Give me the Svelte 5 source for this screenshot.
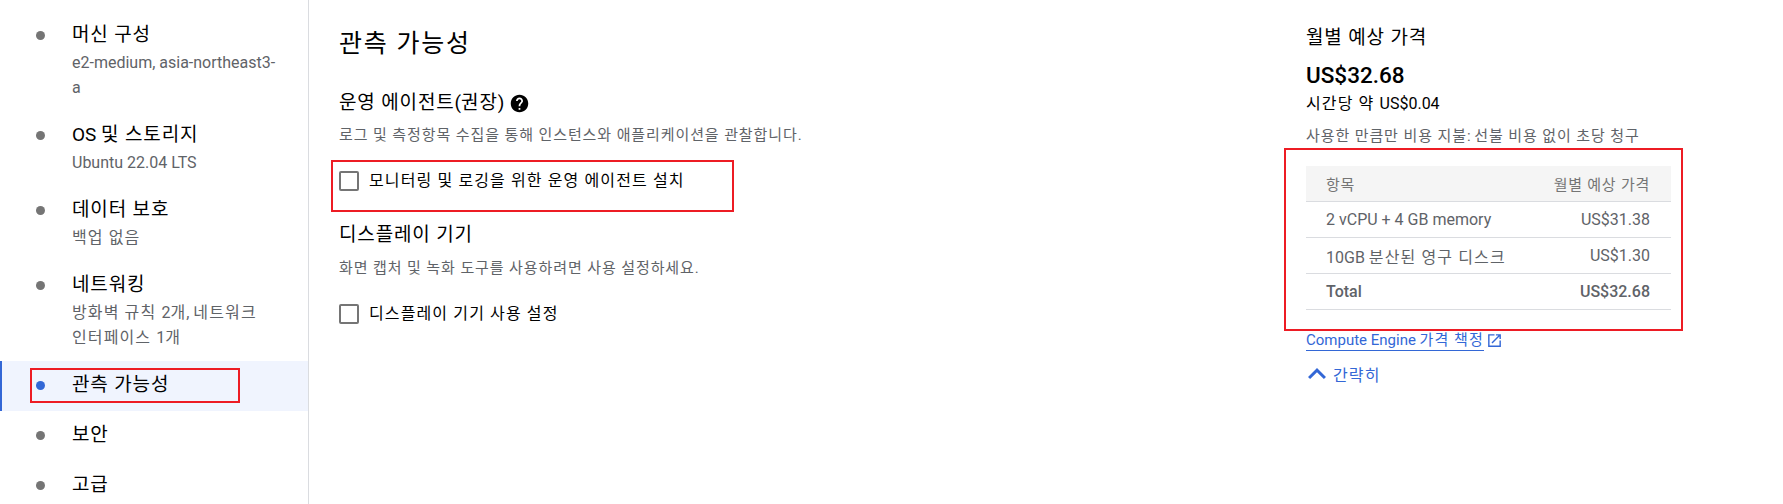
<script>
	const steps = [
		{ title: '머신 구성', sub: ['e2-medium, asia-northeast3-', 'a'] },
		{ title: 'OS 및 스토리지', sub: ['Ubuntu 22.04 LTS'] },
		{ title: '데이터 보호', sub: ['백업 없음'] },
		{ title: '네트워킹', sub: ['방화벽 규칙 2개, 네트워크', '인터페이스 1개'] },
		{ title: '관측 가능성', sub: [], active: true },
		{ title: '보안', sub: [] },
		{ title: '고급', sub: [] }
	];

	const rows = [
		{ name: '2 vCPU + 4 GB memory', price: 'US$31.38' },
		{ name: '10GB 분산된 영구 디스크', price: 'US$1.30' },
		{ name: 'Total', price: 'US$32.68', total: true }
	];

	// hangul runs get a little tracking, the installed CJK font sets tighter than the original
	function runs(text) {
		return text.split(/([가-힣][가-힣 ]*)/).filter(Boolean).map((part) => ({
			part,
			ko: /[가-힣]/.test(part)
		}));
	}
</script>

{#snippet t(text)}{#each runs(text) as run}<span class={run.ko ? 'ko' : ''}>{run.part}</span>{/each}{/snippet}

<div class="page">
	<nav class="sidebar">
		{#each steps as step}
			<div class="step" class:active={step.active}>
				<span class="dot"></span>
				<div class="step-text">
					<div class="step-title">{@render t(step.title)}</div>
					{#each step.sub as line}
						<div class="step-sub">{@render t(line)}</div>
					{/each}
				</div>
			</div>
		{/each}
	</nav>

	<main class="content">
		<h1>{@render t('관측 가능성')}</h1>

		<h2><span>{@render t('운영 에이전트(권장)')}</span>
			<svg class="help" viewBox="0 0 24 24" width="21" height="21">
				<path fill="#000" d="M12 2C6.48 2 2 6.48 2 12s4.48 10 10 10 10-4.48 10-10S17.52 2 12 2zm1 17h-2v-2h2v2zm2.07-7.75l-.9.92C13.45 12.9 13 13.5 13 15h-2v-.5c0-1.1.45-2.1 1.17-2.83l1.24-1.26c.37-.36.59-.86.59-1.41 0-1.1-.9-2-2-2s-2 .9-2 2H8c0-2.21 1.79-4 4-4s4 1.79 4 4c0 .88-.36 1.68-.93 2.25z"/>
			</svg>
		</h2>
		<p class="desc">{@render t('로그 및 측정항목 수집을 통해 인스턴스와 애플리케이션을 관찰합니다.')}</p>
		<label class="check first"><span class="box"></span><span>{@render t('모니터링 및 로깅을 위한 운영 에이전트 설치')}</span></label>

		<h2>{@render t('디스플레이 기기')}</h2>
		<p class="desc second">{@render t('화면 캡처 및 녹화 도구를 사용하려면 사용 설정하세요.')}</p>
		<label class="check"><span class="box"></span><span>{@render t('디스플레이 기기 사용 설정')}</span></label>
	</main>

	<aside class="cost">
		<div class="cost-title">{@render t('월별 예상 가격')}</div>
		<div class="cost-total">US$32.68</div>
		<div class="cost-hour">{@render t('시간당 약 US$0.04')}</div>
		<div class="cost-note">{@render t('사용한 만큼만 비용 지불: 선불 비용 없이 초당 청구')}</div>

		<div class="table">
			<div class="row head"><span>{@render t('항목')}</span><span>{@render t('월별 예상 가격')}</span></div>
			{#each rows as row}
				<div class="row" class:total={row.total}><span>{@render t(row.name)}</span><span>{row.price}</span></div>
			{/each}
		</div>

		<div class="links">
			<a class="price-link" href="#pricing">{@render t('Compute Engine 가격 책정')}</a>
			<svg viewBox="0 0 24 24" width="17" height="17">
				<path fill="#3367d6" d="M19 19H5V5h7V3H3v18h18v-9h-2v7zM14 3v2h3.59l-9.83 9.83 1.41 1.41L19 6.41V10h2V3h-7z"/>
			</svg>
		</div>
		<div class="less">
			<svg viewBox="4 6.67 16 10.67" width="24" height="16">
				<path fill="#3367d6" d="M12 8l-6 6 1.41 1.41L12 10.83l4.59 4.58L18 14z"/>
			</svg>
			<span>{@render t('간략히')}</span>
		</div>
	</aside>

	<!-- red review marks drawn on top of the screenshot -->
	<div class="mark mark-nav"></div>
	<div class="mark mark-check"></div>
	<div class="mark mark-table"></div>
</div>

<style>
	:global(body) {
		margin: 0;
		background: #fff;
	}
	.page {
		position: relative;
		display: flex;
		height: 504px;
		overflow: hidden;
		font-family: Roboto, "Noto Sans CJK KR", sans-serif;
		color: #000;
	}
	.ko {
		letter-spacing: var(--ko, 0.07em);
	}
	.sidebar {
		box-sizing: border-box;
		flex: 0 0 309px;
		padding-top: 10px;
		border-right: 1px solid #dadce0;
	}
	.step {
		display: flex;
		box-sizing: border-box;
		min-height: 50px;
		padding: 11px 0 10px 36px;
	}
	.step:nth-child(4) {
		padding-bottom: 11px;
	}
	.step.active {
		padding-left: 34px;
		border-left: 2px solid #3367d6;
		background: #f0f4fe;
	}
	.step.active .dot,
	.step.active ~ .step .dot {
		margin-top: 8.5px;
	}
	.step.active .step-title,
	.step.active ~ .step .step-title {
		margin-top: -1px;
	}
	.dot {
		flex: none;
		width: 9px;
		height: 9px;
		margin-top: 9.5px;
		border-radius: 50%;
		background: #757575;
	}
	.active .dot {
		background: #3367d6;
	}
	.step-text {
		margin-left: 27px;
		width: 215px;
	}
	.step-title {
		--ko: 0.045em;
		margin-bottom: 1px;
		font-size: 19px;
		line-height: 28px;
	}
	.step-sub {
		font-size: 16px;
		line-height: 25px;
		color: #5f6368;
	}
	.content {
		flex: 0 0 997px;
		box-sizing: border-box;
		padding-left: 30px;
	}
	h1 {
		--ko: 0.07em;
		margin: 28px 0 29px;
		font-size: 25px;
		line-height: 32px;
		font-weight: 400;
	}
	h2 {
		--ko: 0.045em;
		display: flex;
		align-items: center;
		gap: 5px;
		margin: 0;
		font-size: 19px;
		line-height: 28px;
		font-weight: 400;
	}
	.desc {
		--ko: 0.06em;
		margin: 6px 0 0;
		font-size: 15px;
		line-height: 24px;
		color: #5f6368;
	}
	.desc.second {
		margin-top: 7px;
	}
	.check {
		display: flex;
		align-items: flex-start;
		gap: 10px;
		margin-top: 22px;
		font-size: 16px;
		line-height: 24px;
	}
	.check.first {
		height: 52px;
	}
	.box {
		box-sizing: border-box;
		flex: none;
		width: 20px;
		height: 20px;
		margin-top: 2px;
		border: 2px solid #757575;
		border-radius: 2px;
	}
	.cost {
		flex: 1;
		padding-top: 25px;
	}
	.cost-title {
		--ko: 0.045em;
		font-size: 19px;
		line-height: 26px;
	}
	.cost-total {
		margin-top: 10px;
		font-size: 22.5px;
		line-height: 28px;
		font-weight: 500;
	}
	.cost-hour {
		margin-top: 3px;
		font-size: 16px;
		line-height: 24px;
	}
	.cost-note {
		--ko: 0.06em;
		margin-top: 8px;
		font-size: 15px;
		line-height: 24px;
		color: #5f6368;
	}
	.table {
		width: 365px;
		margin-top: 18px;
	}
	.row {
		display: flex;
		justify-content: space-between;
		align-items: center;
		box-sizing: border-box;
		height: 36px;
		padding: 0 21px 0 20px;
		border-bottom: 1px solid #dadce0;
		font-size: 16px;
		color: #5f6368;
	}
	.row.head {
		--ko: 0.05em;
		background: #f5f5f5;
		font-size: 15px;
		color: #757575;
	}
	.row.total {
		font-weight: 500;
	}
	.links {
		display: flex;
		align-items: center;
		gap: 2px;
		margin-top: 20px;
	}
	.price-link {
		font-size: 15px;
		line-height: 20px;
		color: #3367d6;
		text-decoration: none;
		border-bottom: 1px solid #3367d6;
	}
	.less {
		display: flex;
		align-items: center;
		gap: 4px;
		margin-top: 11px;
		margin-left: -1px;
		font-size: 16px;
		color: #3367d6;
	}
	.mark {
		position: absolute;
		box-sizing: border-box;
		border: 2px solid #ed1c24;
	}
	.mark-nav {
		left: 30px;
		top: 368px;
		width: 210px;
		height: 35px;
	}
	.mark-check {
		left: 331px;
		top: 160px;
		width: 403px;
		height: 52px;
	}
	.mark-table {
		left: 1284px;
		top: 148px;
		width: 399px;
		height: 183px;
	}
</style>
